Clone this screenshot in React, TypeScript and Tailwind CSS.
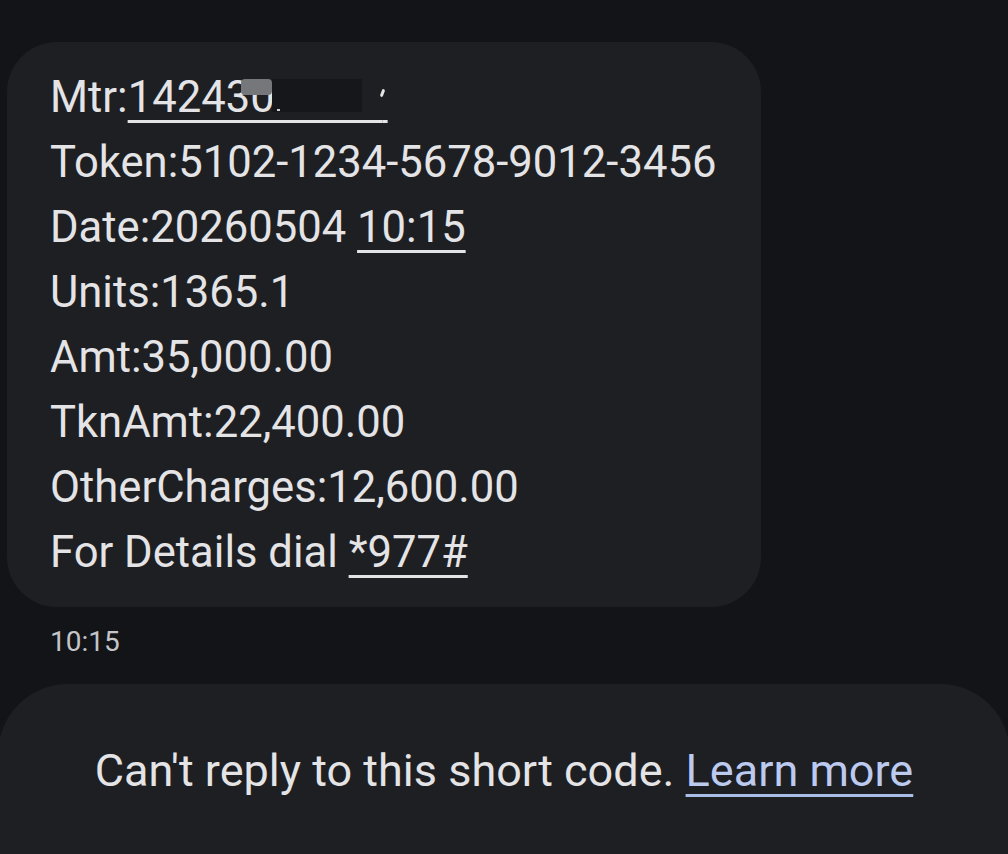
import React from "react";

const lines = [
  { label: "Token:", value: "5102-1234-5678-9012-3456" },
  { label: "Date:", value: "20260504 ", link: "10:15" },
  { label: "Units:", value: "1365.1" },
  { label: "Amt:", value: "35,000.00" },
  { label: "TknAmt:", value: "22,400.00" },
  { label: "OtherCharges:", value: "12,600.00" },
  { label: "For Details dial ", value: "", link: "*977#" },
];

const MeterLine: React.FC = () => (
  <div>
    Mtr:
    <span className="relative underline decoration-[3px] underline-offset-[8px]">
      {"142430\u00a0\u00a0\u00a0\u00a0\u00a0\u00a0\u00a0\u00a0\u00a0\u00a0"}
      <span className="tracking-[-6px]">{"\u00a0"}</span>
      {/* redaction marks over the meter number */}
      <span className="absolute left-[113px] top-[7px] h-[16px] w-[31px] bg-[#76777a] rounded-sm" />
      <span className="absolute left-[144px] top-[7px] h-[33px] w-[90px] bg-[#16171a]" />
      <span className="absolute left-[149px] top-[37px] h-[2px] w-[3px] bg-[#d0d0d0]" />
      <span className="absolute left-[253px] top-[17px] h-[8px] w-[3px] rotate-[20deg] bg-[#e4e4e4] rounded-sm" />
    </span>
  </div>
);

export default function App() {
  return (
    <div className="h-[854px] w-full overflow-hidden bg-[#131418] font-['Roboto',sans-serif] text-[#e4e4e6] flex flex-col">
      {/* message bubble */}
      <div className="ml-[7px] mt-[42px] w-[754px] rounded-[50px] bg-[#1e1f23] pl-[43px] pt-[23px] pb-[22px] text-[43.6px] leading-[65px]">
        <MeterLine />
        {lines.map((l) => (
          <div key={l.label}>
            {l.label}
            {l.value}
            {l.link && (
              <span className="underline decoration-[3px] underline-offset-[8px]">{l.link}</span>
            )}
          </div>
        ))}
      </div>

      {/* timestamp */}
      <div className="ml-[50px] mt-[18px] text-[28px] leading-[34px] text-[#c4c5c8]">10:15</div>

      {/* short code notice */}
      <div className="ml-[-2px] mt-[25px] w-[1012px] flex-1 rounded-t-[70px] bg-[#1e1f22] pt-[54px] text-center text-[45px] leading-[65px]">
        Can't reply to this short code.{" "}
        <span className="text-[#bccaf0] underline decoration-[3px] underline-offset-[8px] decoration-[#a9bde9]">
          Learn more
        </span>
      </div>
    </div>
  );
}
